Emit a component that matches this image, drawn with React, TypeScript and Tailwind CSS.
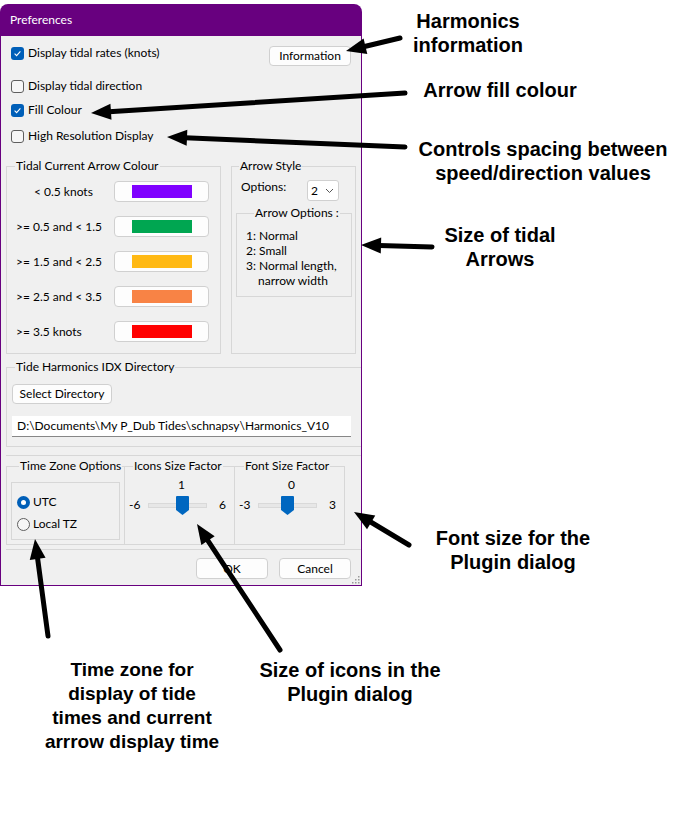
import React from 'react';

const ui = "font-['Segoe_UI',Lato,sans-serif] text-[12px] leading-[16px] text-black";
const note = "font-['Liberation_Sans',Arial,sans-serif] font-bold text-[20px] leading-[24px] text-black text-center whitespace-nowrap";
const btn = "flex items-center justify-center bg-[#fdfdfd] border border-[#d0d0d0] rounded-[4px]";

const CheckBox = ({ checked, label }: { checked: boolean; label: string }) => (
  <div className="flex items-center h-[16px] gap-[4px]">
    {checked ? (
      <span className="w-[13px] h-[13px] rounded-[3px] bg-[#005fb8] flex items-center justify-center">
        <svg width="9" height="9" viewBox="0 0 9 9">
          <path d="M1.6 4.7 L3.6 6.6 L7.4 2.4" stroke="#fff" strokeWidth="1.1" fill="none" />
        </svg>
      </span>
    ) : (
      <span className="w-[13px] h-[13px] rounded-[3px] border border-[#5f5f5f] bg-[#f7f7f7]" />
    )}
    <span>{label}</span>
  </div>
);

const Radio = ({ checked, label }: { checked: boolean; label: string }) => (
  <div className="flex items-center h-[16px] gap-[3px]">
    {checked ? (
      <span className="w-[13px] h-[13px] rounded-full bg-[#005fb8] flex items-center justify-center">
        <span className="w-[5px] h-[5px] rounded-full bg-white" />
      </span>
    ) : (
      <span className="w-[13px] h-[13px] rounded-full border border-[#5f5f5f] bg-[#f7f7f7]" />
    )}
    <span>{label}</span>
  </div>
);

const Swatch = ({ label, color, first }: { label: string; color: string; first?: boolean }) => (
  <div className="flex items-center h-[21px]">
    <span className={first ? 'w-[107px] pl-[27px]' : 'w-[107px] pl-[9px]'}>{label}</span>
    <div className={`${btn} w-[95px] h-[21px]`}>
      <span className="w-[60px] h-[13px]" style={{ backgroundColor: color }} />
    </div>
  </div>
);

const Slider = ({ min, max, value, offset }: { min: string; max: string; value: string; offset: number }) => (
  <div className="pt-[3px]">
    <div className="text-center pl-[4px]">{value}</div>
    <div className="flex items-center h-[20px] mt-[2px]">
      <span className="w-[23px] pl-[4px]">{min}</span>
      <div className="relative w-[59px] h-[5px] bg-[#e7e7e7] border border-[#d9d9d9]">
        <svg className="absolute top-[-8px]" style={{ left: offset }} width="13" height="19" viewBox="0 0 13 19">
          <path d="M0 1 Q0 0 1 0 H12 Q13 0 13 1 V14 L6.5 19 L0 14 Z" fill="#0067c0" />
        </svg>
      </div>
      <span className="ml-[12px]">{max}</span>
    </div>
  </div>
);

type Pt = [number, number];
const Arrow = ({ from, to }: { from: Pt; to: Pt }) => {
  const dx = to[0] - from[0];
  const dy = to[1] - from[1];
  const len = Math.hypot(dx, dy);
  const ux = dx / len;
  const uy = dy / len;
  const bx = to[0] - ux * 20;
  const by = to[1] - uy * 20;
  const px = -uy * 8;
  const py = ux * 8;
  return (
    <g>
      <line x1={from[0]} y1={from[1]} x2={bx + ux * 2} y2={by + uy * 2} stroke="#000" strokeWidth="5" strokeLinecap="round" />
      <polygon points={`${to[0]},${to[1]} ${bx + px},${by + py} ${bx - px},${by - py}`} fill="#000" />
    </g>
  );
};

function Dialog() {
  return (
    <div className={`w-[362px] ${ui}`}>
      <div className="h-[32px] rounded-t-[8px] bg-[#68007f] text-white flex items-center pl-[10px]">Preferences</div>
      <div className="bg-[#f0f0f0] border-x border-b border-[#68007f] pb-[6px] relative">
        <div className="pl-[10px] pr-[10px] pt-[9px]">
          <div className="flex justify-between items-start">
            <CheckBox checked label="Display tidal rates (knots)" />
            <div className={`${btn} w-[82px] h-[20px] mt-[1px]`}>Information</div>
          </div>
          <div className="mt-[12px]">
            <CheckBox checked={false} label="Display tidal direction" />
          </div>
          <div className="mt-[8px]">
            <CheckBox checked label="Fill Colour" />
          </div>
          <div className="mt-[10px]">
            <CheckBox checked={false} label="High Resolution Display" />
          </div>
        </div>

        <div className="flex items-stretch gap-[10px] ml-[5px] mt-[14px]">
          <fieldset className="w-[215px] border border-[#d7d7d7] pt-[7px] pb-[11px] flex flex-col gap-[14px]">
            <legend className="ml-[8px] px-[1px] whitespace-nowrap">Tidal Current Arrow Colour</legend>
            <Swatch first label="< 0.5 knots" color="#8000ff" />
            <Swatch label=">= 0.5 and < 1.5" color="#00a651" />
            <Swatch label=">= 1.5 and < 2.5" color="#ffb914" />
            <Swatch label=">= 2.5 and < 3.5" color="#f88345" />
            <Swatch label=">= 3.5 knots" color="#ff0000" />
          </fieldset>
          <fieldset className="w-[125px] border border-[#d7d7d7] pt-[5px]">
            <legend className="ml-[7px] px-[1px] whitespace-nowrap">Arrow Style</legend>
            <div className="flex items-start pl-[9px]">
              <span className="w-[66px]">Options:</span>
              <div className="mt-[1px] w-[32px] h-[21px] bg-white border border-[#d0d0d0] rounded-[3px] flex items-center justify-between pl-[3px] pr-[4px]">
                <span>2</span>
                <svg width="9" height="6" viewBox="0 0 9 6">
                  <path d="M1 1 L4.5 4.5 L8 1" stroke="#555" strokeWidth="1" fill="none" />
                </svg>
              </div>
            </div>
            <fieldset className="ml-[4px] mt-[4px] w-[116px] border border-[#d7d7d7] pt-[7px] pb-[8px] pl-[9px] leading-[15px]">
              <legend className="ml-[8px] px-[1px] leading-[16px] whitespace-nowrap">Arrow Options :</legend>
              <div>1: Normal</div>
              <div>2: Small</div>
              <div>3: Normal length,</div>
              <div className="pl-[12px]">narrow width</div>
            </fieldset>
          </fieldset>
        </div>

        <fieldset className="ml-[5px] mt-[5px] border border-r-0 border-[#d7d7d7] pt-[9px] pb-[9px] pl-[5px]">
          <legend className="ml-[3px] px-[1px] whitespace-nowrap">Tide Harmonics IDX Directory</legend>
          <div className={`${btn} w-[100px] h-[20px]`}>Select Directory</div>
          <div className="mt-[12px] w-[339px] h-[21px] bg-white border-b border-[#878787] flex items-center pl-[5px]">
            D:\Documents\My P_Dub Tides\schnapsy\Harmonics_V10
          </div>
        </fieldset>

        <div className="ml-[5px] mt-[8px] border-y border-[#d7d7d7] pt-[2px] pb-[4px] flex">
          <fieldset className="w-[119px] border border-[#d7d7d7] pt-[8px] pl-[4px] pb-[4px]">
            <legend className="ml-[8px] px-[1px] whitespace-nowrap">Time Zone Options</legend>
            <div className="w-[109px] h-[58px] border border-[#d7d7d7] pt-[11px] pl-[5px] flex flex-col gap-[6px]">
              <Radio checked label="UTC" />
              <Radio checked={false} label="Local TZ" />
            </div>
          </fieldset>
          <fieldset className="w-[110px] border border-l-0 border-[#d7d7d7]">
            <legend className="ml-[8px] px-[1px] whitespace-nowrap">Icons Size Factor</legend>
            <Slider min="-6" max="6" value="1" offset={27} />
          </fieldset>
          <fieldset className="w-[110px] border border-l-0 border-[#d7d7d7]">
            <legend className="ml-[9px] px-[1px] whitespace-nowrap">Font Size Factor</legend>
            <Slider min="-3" max="3" value="0" offset={22} />
          </fieldset>
        </div>

        <div className="flex justify-end gap-[11px] pr-[10px] mt-[8px]">
          <div className={`${btn} w-[72px] h-[21px]`}>OK</div>
          <div className={`${btn} w-[72px] h-[21px]`}>Cancel</div>
        </div>

        <svg className="absolute right-[1px] bottom-[1px]" width="9" height="9" viewBox="0 0 9 9">
          {[[7, 1], [4, 4], [7, 4], [1, 7], [4, 7], [7, 7]].map(([x, y], i) => (
            <rect key={i} x={x} y={y} width="1.5" height="1.5" fill="#9a9a9a" />
          ))}
        </svg>
      </div>
    </div>
  );
}

export default function App() {
  return (
    <div className="relative w-[691px] h-[815px] bg-white overflow-hidden">
      <div className="flex items-start">
        <div className="pt-[4px]">
          <Dialog />
        </div>
        <div className={`flex flex-col ${note}`}>
          <div className="w-[120px] ml-[46px] mt-[9px]">Harmonics<br />information</div>
          <div className="w-[170px] ml-[53px] mt-[21px]">Arrow fill colour</div>
          <div className="w-[270px] ml-[46px] mt-[35px]">Controls spacing between<br />speed/direction values</div>
          <div className="w-[130px] ml-[73px] mt-[38px]">Size of tidal<br />Arrows</div>
          <div className="w-[180px] ml-[61px] mt-[255px]">Font size for the<br />Plugin dialog</div>
        </div>
      </div>
      <div className={`flex items-start mt-[72px] ${note}`}>
        <div className="w-[210px] ml-[27px] text-[19px]">Time zone for<br />display of tide<br />times and current<br />arrrow display time</div>
        <div className="w-[220px] ml-[3px]">Size of icons in the<br />Plugin dialog</div>
      </div>
      <svg className="absolute inset-0 pointer-events-none" width="691" height="815">
        <Arrow from={[400, 38]} to={[346, 51]} />
        <Arrow from={[405, 93]} to={[91, 113]} />
        <Arrow from={[405, 147]} to={[167, 137]} />
        <Arrow from={[432, 247]} to={[361, 245]} />
        <Arrow from={[409, 545]} to={[354, 512]} />
        <Arrow from={[48, 636]} to={[35, 539]} />
        <Arrow from={[280, 650]} to={[197, 524]} />
      </svg>
    </div>
  );
}
